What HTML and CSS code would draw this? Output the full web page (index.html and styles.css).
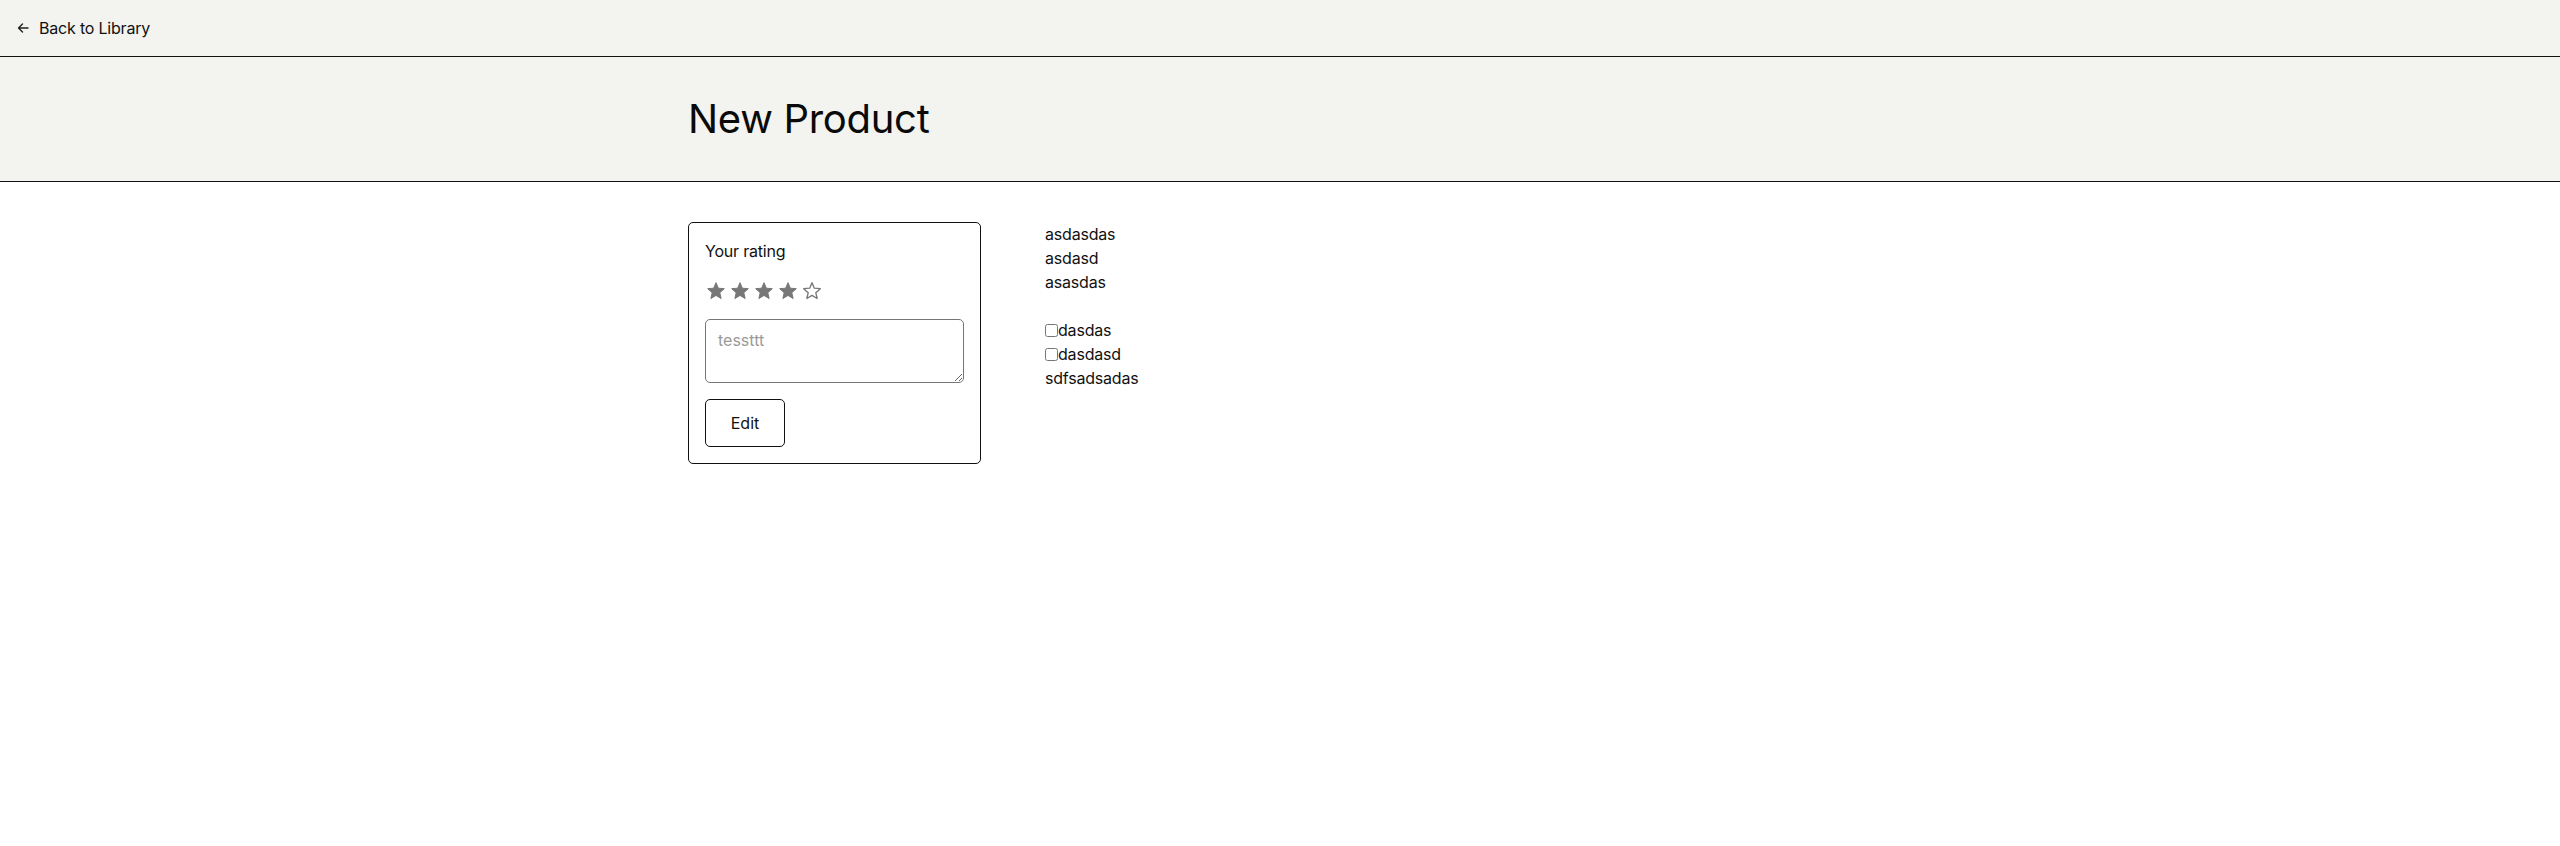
FILE: index.html
```html
<!DOCTYPE html>
<html lang="en">
<head>
<meta charset="utf-8">
<title>New Product</title>
<link rel="stylesheet" href="styles.css">
</head>
<body>
  <nav class="topbar">
    <a class="back-link" href="#">
      <svg class="back-icon" viewBox="0 0 16 16" width="16" height="16" aria-hidden="true">
        <path d="M13 8H3.5M7.5 4L3.5 8l4 4" fill="none" stroke="#222" stroke-width="1.4" stroke-linecap="round" stroke-linejoin="round"/>
      </svg>
      <span>Back to Library</span>
    </a>
  </nav>
  <header class="page-header">
    <div class="container">
      <h1 class="title">New Product</h1>
    </div>
  </header>
  <main class="container content">
    <section class="rating-card">
      <div class="rating-label">Your rating</div>
      <div class="stars">
        <svg class="star" viewBox="0 0 24 24"><path class="star-full" d="M12 17.27L18.18 21l-1.64-7.03L22 9.24l-7.19-.61L12 2 9.19 8.63 2 9.24l5.46 4.73L5.82 21z"/></svg>
        <svg class="star" viewBox="0 0 24 24"><path class="star-full" d="M12 17.27L18.18 21l-1.64-7.03L22 9.24l-7.19-.61L12 2 9.19 8.63 2 9.24l5.46 4.73L5.82 21z"/></svg>
        <svg class="star" viewBox="0 0 24 24"><path class="star-full" d="M12 17.27L18.18 21l-1.64-7.03L22 9.24l-7.19-.61L12 2 9.19 8.63 2 9.24l5.46 4.73L5.82 21z"/></svg>
        <svg class="star" viewBox="0 0 24 24"><path class="star-full" d="M12 17.27L18.18 21l-1.64-7.03L22 9.24l-7.19-.61L12 2 9.19 8.63 2 9.24l5.46 4.73L5.82 21z"/></svg>
        <svg class="star" viewBox="0 0 24 24"><path class="star-empty" d="M12 17.27L18.18 21l-1.64-7.03L22 9.24l-7.19-.61L12 2 9.19 8.63 2 9.24l5.46 4.73L5.82 21z"/></svg>
      </div>
      <textarea class="review" placeholder="tessttt"></textarea>
      <div><button class="edit-btn" type="button">Edit</button></div>
    </section>
    <section class="details">
      <div class="block">
        <div>asdasdas</div>
        <div>asdasd</div>
        <div>asasdas</div>
      </div>
      <div class="block">
        <label class="check"><input type="checkbox">dasdas</label>
        <label class="check"><input type="checkbox">dasdasd</label>
        <div>sdfsadsadas</div>
      </div>
    </section>
  </main>
</body>
</html>
```
FILE: styles.css
```css
* { box-sizing: border-box; }

body {
  margin: 0;
  background: #ffffff;
  color: #111111;
  font-family: "Inter", "Noto Sans", sans-serif;
  font-size: 16px;
  line-height: 24px;
}

.container {
  width: 1184px;
  margin: 0 auto;
}

.topbar {
  height: 57px;
  background: #f3f3ef;
  border-bottom: 1px solid #111;
  display: flex;
  align-items: center;
  padding: 0 15px;
}

.back-link {
  display: flex;
  align-items: center;
  gap: 8px;
  color: #111;
  text-decoration: none;
  font-size: 16px;
  letter-spacing: -0.2px;
}

.back-icon { display: block; }

.page-header {
  background: #f3f3ef;
  border-bottom: 1px solid #111;
  padding: 32px 0;
}

.title {
  margin: 0;
  font-size: 40px;
  line-height: 60px;
  font-weight: 400;
  letter-spacing: -0.3px;
  color: #0a0a0a;
}

.content {
  display: flex;
  align-items: flex-start;
  gap: 64px;
  padding-top: 40px;
}

.rating-card {
  width: 293px;
  border: 1px solid #111;
  border-radius: 5px;
  padding: 16px;
  display: flex;
  flex-direction: column;
  gap: 16px;
}

.rating-label {
  font-size: 16px;
  line-height: 24px;
  letter-spacing: -0.2px;
}

.stars {
  display: flex;
  gap: 4px;
  height: 24px;
  align-items: center;
  padding-left: 1px;
}

.star {
  width: 20px;
  height: 20px;
  display: block;
}

.star-full {
  fill: #777777;
  stroke: #777777;
  stroke-width: 1.2;
  stroke-linejoin: round;
}

.star-empty {
  fill: none;
  stroke: #777777;
  stroke-width: 1.6;
  stroke-linejoin: round;
}

.review {
  display: block;
  width: 100%;
  height: 64px;
  border: 1px solid #767676;
  border-radius: 5px;
  padding: 8px 12px;
  font-family: inherit;
  font-size: 16px;
  line-height: 24px;
  resize: vertical;
  margin: 0;
}

.review::placeholder { color: #9a9a9a; }

.edit-btn {
  height: 48px;
  width: 80px;
  background: #fff;
  border: 1px solid #111;
  border-radius: 5px;
  font-family: inherit;
  font-size: 16px;
  color: #111;
  padding: 0;
}

.details {
  display: flex;
  flex-direction: column;
  gap: 24px;
  font-size: 16px;
  line-height: 24px;
  letter-spacing: -0.2px;
}

.check {
  display: flex;
  align-items: center;
}

.check input {
  margin: 0;
  width: 13px;
  height: 13px;
}
```
